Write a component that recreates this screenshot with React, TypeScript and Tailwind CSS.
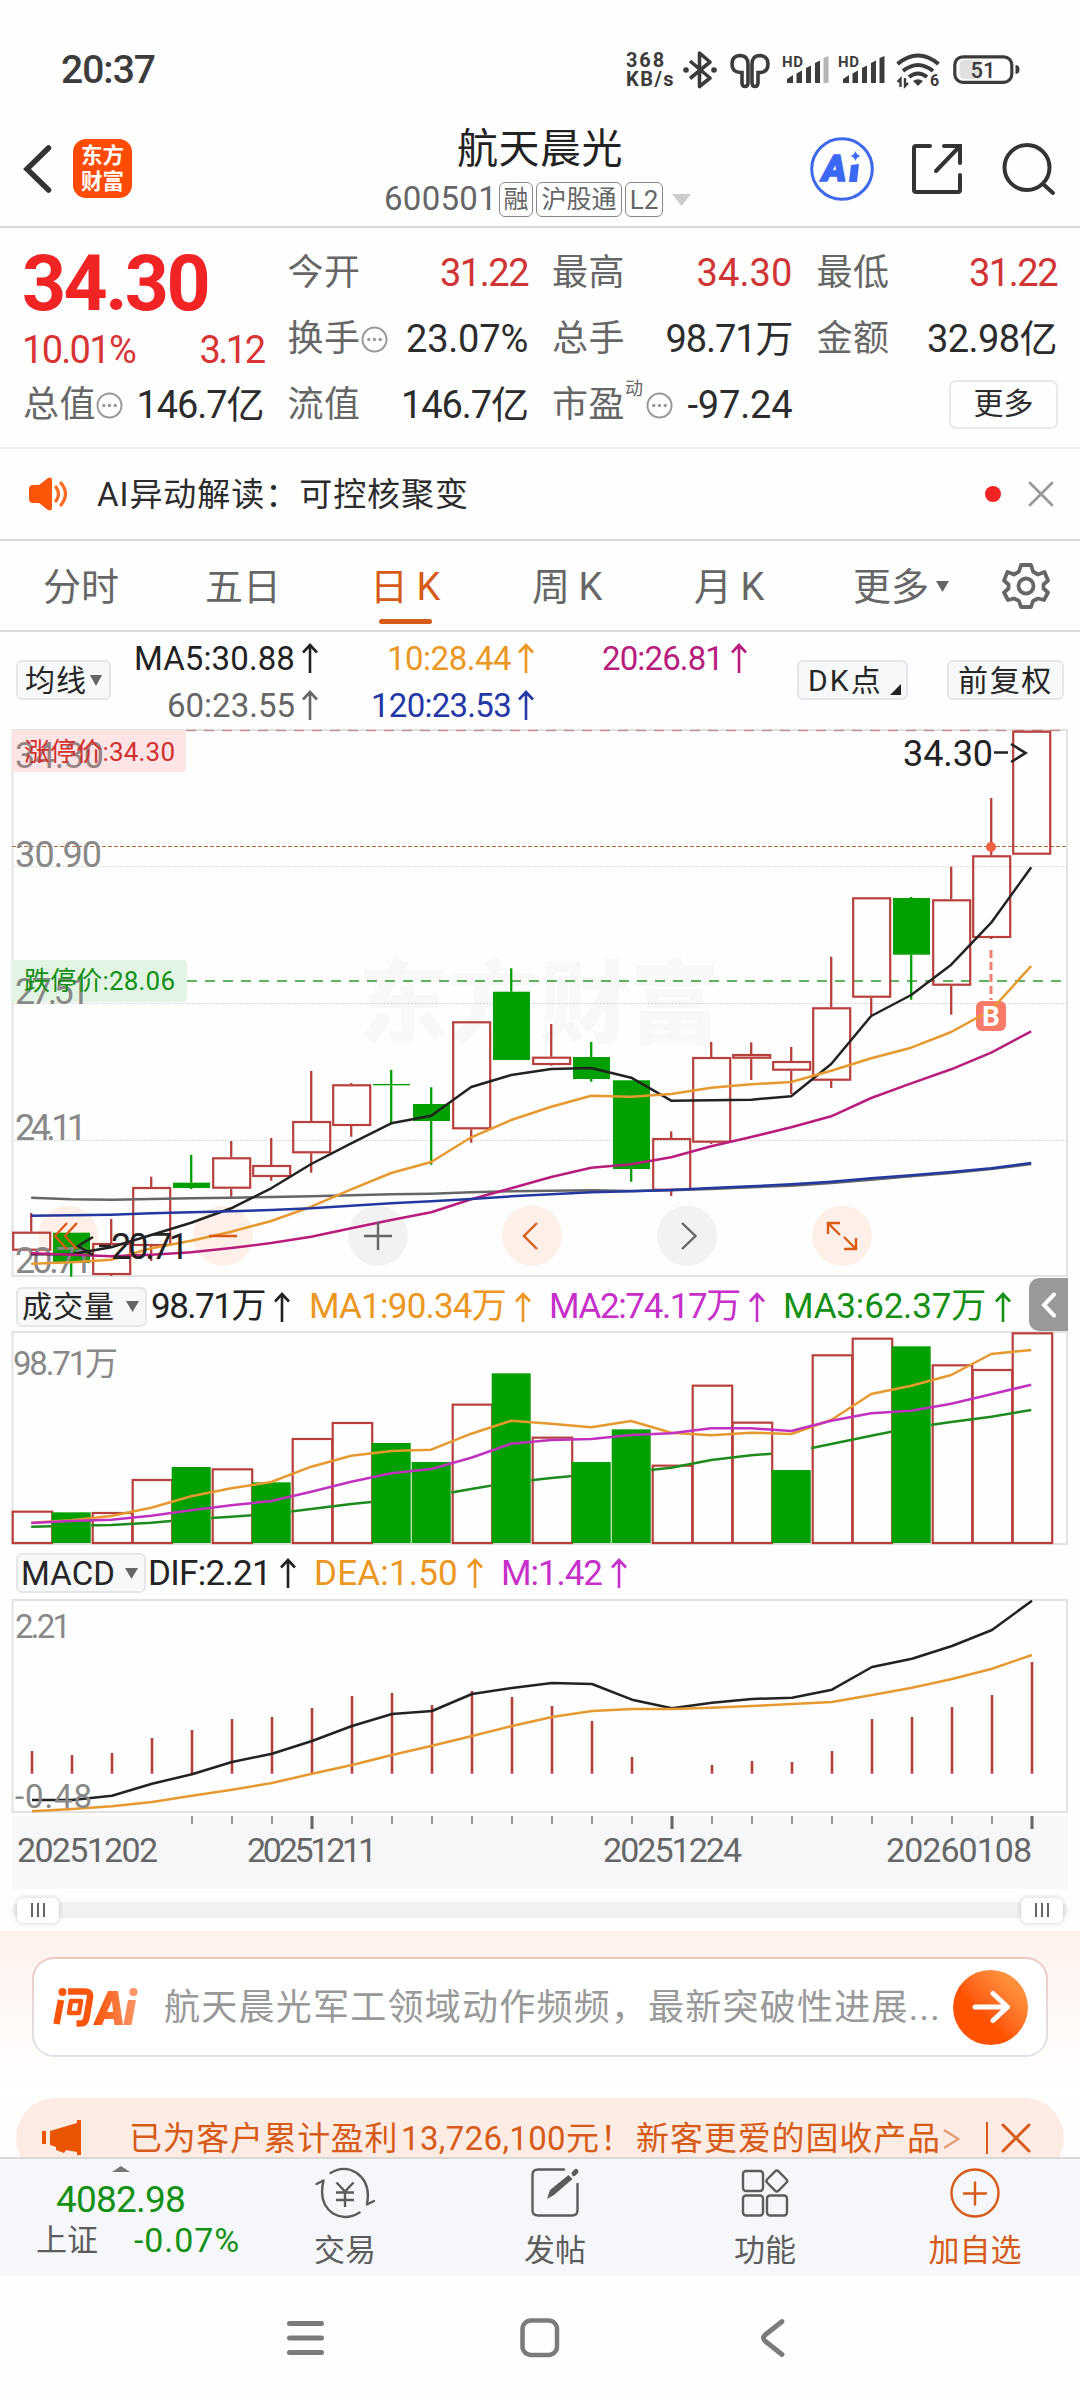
import React, { useLayoutEffect, useRef, useState } from "react";

/* Single line of text whose tracking is adjusted so that it fills w pixels. */
function Fit({ w, className = "", outer = "", children }: { w: number; className?: string; outer?: string; children: string }) {
  const ref = useRef<HTMLSpanElement>(null);
  const [spacing, setSpacing] = useState(0);
  useLayoutEffect(() => {
    const el = ref.current;
    if (el) setSpacing((w - el.getBoundingClientRect().width) / Array.from(children).length);
  }, []);
  return (
    <span className={"inline-block shrink-0 whitespace-nowrap " + outer} style={{ width: w }}>
      <span ref={ref} className={className} style={{ letterSpacing: spacing }}>
        {children}
      </span>
    </span>
  );
}

function Arrow({ className = "" }: { className?: string }) {
  return (
    <svg width="16" height="30" viewBox="0 0 16 30" fill="none" stroke="currentColor" strokeWidth="2.6" className={"shrink-0 " + className}>
      <path d="M8 30V2M1 9.5L8 2l7 7.5" />
    </svg>
  );
}

function Down({ w, h, className = "" }: { w: number; h: number; className?: string }) {
  return (
    <svg width={w} height={h} viewBox="0 0 12 10" preserveAspectRatio="none" fill="currentColor" className={"shrink-0 " + className}>
      <path d="M0 0h12L6 10z" />
    </svg>
  );
}

function Dots({ className = "" }: { className?: string }) {
  return (
    <svg width="27" height="27" viewBox="0 0 27 27" className={"shrink-0 " + className}>
      <circle cx="13.5" cy="13.5" r="12" fill="none" stroke="#999" strokeWidth="2" />
      <circle cx="7.8" cy="13.5" r="1.7" fill="#999" />
      <circle cx="13.5" cy="13.5" r="1.7" fill="#999" />
      <circle cx="19.2" cy="13.5" r="1.7" fill="#999" />
    </svg>
  );
}

function Signal({ last }: { last: string }) {
  return (
    <svg width="47" height="30" viewBox="0 0 47 30" fill="#3c3c3c" className="overflow-visible">
      <text x="0" y="12" fontSize="15" fontWeight="700" fontFamily="Roboto" textLength="21">HD</text>
      <path d="M5 28v-4q3-2 6-4v8z" />
      <path d="M14.500 28v-9.500l5.500-3V28z" />
      <path d="M24 28V13l5-2.500V28z" />
      <path d="M33 28V8l5-2.500V28z" />
      <path d="M41.500 28V3l5-2v27z" fill={last} />
    </svg>
  );
}

function StatusBar() {
  return (
    <div className="flex h-[118px] items-start text-[#3c3c3c]">
      <div className="ml-[61px] mt-[51px] leading-none text-[39px] font-medium"><Fit w={94}>20:37</Fit></div>
      <div className="ml-[471px] mt-[51px] flex flex-col text-[20px] font-bold leading-[19px]">
        <Fit w={40}>368</Fit>
        <Fit w={49}>KB/s</Fit>
      </div>
      <svg width="34" height="38" viewBox="0 0 34 38" className="ml-[8px] mt-[51px]" fill="none" stroke="#3c3c3c" strokeWidth="3.6" strokeLinejoin="round">
        <path d="M7 10l20 17-10.500 8.500V2L27 11 7 27.500" />
        <circle cx="3" cy="19" r="2.800" fill="#3c3c3c" stroke="none" />
        <circle cx="31" cy="19" r="2.800" fill="#3c3c3c" stroke="none" />
      </svg>
      <svg width="40" height="36" viewBox="0 0 40 36" className="ml-[13px] mt-[53px]" fill="none" stroke="#3c3c3c" strokeWidth="3.600">
        <path d="M12 19.500v10q0 4 3 4t3-4V11q0-8.500-8-8.500Q2 3 2 11t8 8.500z" />
        <path d="M28 19.500v10q0 4-3 4t-3-4V11q0-8.500 8-8.500Q38 3 38 11t-8 8.500z" />
      </svg>
      <div className="ml-[12px] mt-[55px]"><Signal last="#b5b5b5" /></div>
      <div className="ml-[9px] mt-[55px]"><Signal last="#3c3c3c" /></div>
      <svg width="44" height="34" viewBox="0 0 44 34" className="ml-[11px] mt-[54px] overflow-visible" fill="none" stroke="#3c3c3c" strokeWidth="4">
        <path d="M1.500 10Q22-7 42.500 10" />
        <path d="M7 17Q22 5 37 17" />
        <path d="M13 23q9-7 18 0" />
        <path d="M17 27q5-3.500 10 0l-5 5z" fill="#3c3c3c" stroke="none" />
        <path d="M4.500 33v-8l-3 3M9 24v8l3-3" strokeWidth="2.400" />
        <text x="34" y="32" fontSize="16" fontWeight="700" fontFamily="Roboto" fill="#3c3c3c" stroke="none">6</text>
      </svg>
      <svg width="68" height="30" viewBox="0 0 68 30" className="ml-[13px] mt-[55px]">
        <rect x="1.800" y="1.800" width="57" height="25.500" rx="8" fill="none" stroke="#3c3c3c" strokeWidth="3.200" />
        <path d="M11 5h16v19H11q-4.500 0-4.500-5v-9q0-5 4.500-5z" fill="#e0e0e0" />
        <path d="M62.500 10q4 0 4 4.500t-4 4.500z" fill="#3c3c3c" />
        <text x="30" y="22.500" textAnchor="middle" fontSize="22" fontWeight="500" fontFamily="Roboto" fill="#3c3c3c">51</text>
      </svg>
    </div>
  );
}

function Header() {
  return (
    <div className="flex h-[110px] items-start border-b-2 border-[#dadada]">
      <svg width="30" height="50" viewBox="0 0 30 50" className="ml-[23px] mt-[26px]" fill="none" stroke="#333" strokeWidth="5.500" strokeLinecap="round">
        <path d="M25.500 4L4 25l21.500 21" />
      </svg>
      <div className="ml-[20px] mt-[21px] flex h-[59px] w-[59px] flex-col items-center justify-center rounded-[13px] bg-[#ff4b04] text-[21.5px] font-bold leading-[26px] text-white">
        <span>东方</span>
        <span>财富</span>
      </div>
      <div className="ml-[253px] flex w-[310px] flex-col">
        <div className="ml-[72px] mt-[11px] text-[41px] leading-none text-[#222]"><Fit w={166}>航天晨光</Fit></div>
        <div className="mt-[12px] flex h-[35px] items-center text-[#666]">
          <Fit w={113} className="text-[33px] leading-none" outer="-ml-px">600501</Fit>
          <span className="ml-[2px] flex h-[35px] w-[34px] items-center justify-center rounded-[6px] border-[1.5px] border-[#888] text-[25px] leading-none">融</span>
          <span className="ml-[3px] flex h-[35px] w-[86px] items-center justify-center rounded-[6px] border-[1.5px] border-[#888] text-[25px] leading-none">沪股通</span>
          <span className="ml-[3px] flex h-[35px] w-[38px] items-center justify-center rounded-[6px] border-[1.5px] border-[#888] text-[26px] leading-none">L2</span>
          <Down w={19} h={12} className="ml-[9px] text-[#ccc]" />
        </div>
      </div>
      <svg width="66" height="66" viewBox="0 0 66 66" className="ml-[114px] mt-[18px]">
        <circle cx="33" cy="33" r="30.300" fill="none" stroke="#3e68ea" strokeWidth="3" />
        <text x="13" y="45" fontSize="37" fontWeight="900" fontStyle="italic" fontFamily="Roboto" fill="#3b68f5" stroke="#3b68f5" strokeWidth="1.500" textLength="26">A</text>
        <path d="M42 29l8-1-2 18h-8z" fill="#3b68f5" />
        <path d="M46.500 15q1 4 5 5-4 1-5 5-1-4-5-5 4-1 5-5z" fill="#3b68f5" />
      </svg>
      <svg width="52" height="52" viewBox="0 0 52 52" className="ml-[36px] mt-[25px]" fill="none" stroke="#333" strokeWidth="4">
        <path d="M19 3H5Q3 3 3 5v42q0 2 2 2h42q2 0 2-2V32" strokeLinecap="round" />
        <path d="M33 3h16v17M49 3L25 28" strokeLinecap="round" />
      </svg>
      <svg width="54" height="54" viewBox="0 0 54 54" className="ml-[39px] mt-[25px]" fill="none" stroke="#333" strokeWidth="4">
        <circle cx="25" cy="24.500" r="22.500" />
        <path d="M41 41l10 9" strokeLinecap="round" />
      </svg>
    </div>
  );
}

function Stat({ label, vw, value, red, dots }: { label: string; vw: number; value: string; red?: boolean; dots?: boolean }) {
  return (
    <div className="flex h-[66px] items-center text-[36px] leading-none">
      <Fit w={73} className="text-[#666]">{label}</Fit>
      {dots && <Dots />}
      <div className={"ml-auto text-[38px] " + (red ? "text-[#d03434]" : "text-[#2c2c2c]")}><Fit w={vw}>{value}</Fit></div>
    </div>
  );
}

function Quote() {
  return (
    <div className="grid h-[221px] grid-cols-4 gap-x-6 border-b-2 border-[#efefef] px-[23px] pt-[12px]">
      <div>
        <div className="h-[86px] pt-[6px] text-[77px] font-bold leading-none text-[#f02424]"><Fit w={186} outer="-ml-px">34.30</Fit></div>
        <div className="flex h-[46px] items-center justify-between pt-[2px] text-[38px] leading-none text-[#d83434]">
          <Fit w={113} outer="-ml-px">10.01%</Fit>
          <Fit w={64}>3.12</Fit>
        </div>
        <Stat label="总值" value="146.7亿" vw={127} dots />
      </div>
      <div>
        <Stat label="今开" value="31.22" vw={88} red />
        <Stat label="换手" value="23.07%" vw={122} dots />
        <Stat label="流值" value="146.7亿" vw={127} />
      </div>
      <div>
        <Stat label="最高" value="34.30" vw={96} red />
        <Stat label="总手" value="98.71万" vw={127} />
        <div className="flex h-[66px] items-center text-[36px] leading-none">
          <Fit w={73} className="text-[#666]">市盈</Fit>
          <span className="mb-[32px] text-[18px] text-[#666]">动</span>
          <Dots className="ml-[3px]" />
          <div className="ml-auto text-[38px] text-[#2c2c2c]"><Fit w={105}>-97.24</Fit></div>
        </div>
      </div>
      <div>
        <Stat label="最低" value="31.22" vw={88} red />
        <Stat label="金额" value="32.98亿" vw={130} />
        <div className="flex h-[66px] items-center justify-end">
          <span className="mb-[2px] -mr-px flex h-[49px] w-[109px] items-center justify-center rounded-[7px] border-2 border-[#e9e9e9] text-[30px] leading-none text-[#2c2c2c]">更多</span>
        </div>
      </div>
    </div>
  );
}

function AiNotice() {
  return (
    <div className="flex h-[92px] items-center border-b-2 border-[#dadada] text-[#2c2c2c]">
      <svg width="40" height="34" viewBox="0 0 40 34" className="ml-[29px]">
        <path d="M4 8h6L19 1q4-1.500 4 2v28q0 3.500-4 2l-9-7H4q-4 0-4-4V12q0-4 4-4z" fill="#fb5607" />
        <path d="M27 10q5 7 0 14M32 6q9 11 0 22" fill="none" stroke="#fb6a20" strokeWidth="3.200" strokeLinecap="round" />
      </svg>
      <Fit w={372} outer="ml-[28px] mt-[2px]" className="text-[33px] leading-none">AI异动解读：可控核聚变</Fit>
      <span className="ml-[516px] h-4 w-4 shrink-0 rounded-full bg-[#f02424]" />
      <svg width="26" height="26" viewBox="0 0 26 26" className="ml-[27px]" fill="none" stroke="#999" strokeWidth="2.800" strokeLinecap="round">
        <path d="M2 2l22 22M24 2L2 24" />
      </svg>
    </div>
  );
}

function Tabs() {
  const tabs = ["分时", "五日", "日 K", "周 K", "月 K"];
  return (
    <div className="flex h-[91px] items-stretch border-b-2 border-[#dadada] text-[38px] leading-none text-[#666]">
      {tabs.map((t, i) => (
        <div key={t} className={"flex w-[162px] flex-col items-center pt-[27px] " + (i === 2 ? "text-[#d65a18]" : "")}>
          <span className={t.length > 2 ? "tracking-[-0.5px]" : ""}>{t}</span>
          {i === 2 && <span className="mt-[13px] h-[5px] w-[53px] rounded-full bg-[#d65a18]" />}
        </div>
      ))}
      <div className="ml-[43px] flex items-center pt-[2px]"><Fit w={76}>更多</Fit><Down w={13} h={11} className="ml-[7px]" /></div>
      <svg width="48" height="50" viewBox="-24 -25 48 50" className="ml-[53px] mt-[20px]" fill="none" stroke="#666" strokeWidth="3.800" strokeLinejoin="round">
        <path d="M-5-21H5L7-14.500 12-11.500 18.500-14 22-5.500 17.500-1.500V2.500L22 6.500 18 14 12 12.500 7 15 5 21H-5L-7 15-12 12.500-18 14-22 6.500-17.500 2.500V-1.500L-22-5.500-18.500-14-12-11.500-7-14.500z" />
        <circle r="7.500" />
      </svg>
    </div>
  );
}

const btn = "flex h-10 shrink-0 items-center rounded-[6px] border-2 border-[#e4e6ea] bg-[#f7f8fa] text-[#262626] leading-none";

function MaRow() {
  return (
    <div className="flex h-[97px] text-[33px] leading-none">
      <div className={btn + " ml-4 mt-[28px] w-[95px] pl-[7px] text-[30px]"}>
        <Fit w={62} outer="mt-px">均线</Fit><Down w={12} h={11} className="ml-[3px] text-[#666]" />
      </div>
      <div className="ml-[23px] flex flex-col items-end">
        <div className="flex h-[47px] items-center pt-[5px] text-[#222]"><Fit w={161}>MA5:30.88</Fit><Arrow className="ml-[7px]" /></div>
        <div className="flex h-[47px] items-center pt-[5px] text-[#666]"><Fit w={128}>60:23.55</Fit><Arrow className="ml-[7px]" /></div>
      </div>
      <div className="ml-[53px] flex flex-col items-end">
        <div className="flex h-[47px] items-center pt-[5px] text-[#eb9722]"><Fit w={124}>10:28.44</Fit><Arrow className="ml-[7px]" /></div>
        <div className="flex h-[47px] items-center pt-[5px] text-[#2338a5]"><Fit w={140}>120:23.53</Fit><Arrow className="ml-[7px]" /></div>
      </div>
      <div className="ml-[68px] flex h-[47px] items-center pt-[5px] text-[#b81c7d]"><Fit w={121}>20:26.81</Fit><Arrow className="ml-[8px]" /></div>
      <div className={btn + " ml-[50px] mt-[28px] w-[111px] pl-[9px] text-[30px]"}>
        <Fit w={75} outer="mt-px">DK点</Fit>
        <svg width="11" height="11" viewBox="0 0 11 11" className="ml-[7px] mt-[18px]"><path d="M11 0v11H0z" fill="#222" /></svg>
      </div>
      <div className={btn + " ml-[39px] mt-[28px] w-[117px] pl-[9px] text-[30px]"}><Fit w={95} outer="mt-px">前复权</Fit></div>
    </div>
  );
}

const STEP = 40;
const X0 = 31.2;
const RED = "#b8403c";
const GREEN = "#00a000";

/* [up, high, bodyTop, bodyBottom, low] */
const candles: [boolean, number, number, number, number][] = [
  [true, 1213, 1231.7, 1250.7, 1250.7],
  [false, 1232.7, 1232.7, 1263, 1276.7],
  [true, 1219, 1243, 1275, 1276],
  [true, 1176.7, 1187, 1246, 1261],
  [false, 1155, 1182.7, 1188, 1189],
  [true, 1141, 1157.3, 1188.7, 1196.7],
  [true, 1138, 1165, 1177, 1180.7],
  [true, 1071, 1121, 1153.3, 1172.7],
  [true, 1083, 1084.3, 1126, 1136.7],
  [false, 1070, 1084, 1085.3, 1123],
  [false, 1087.3, 1104, 1121, 1164.7],
  [true, 1021.3, 1021.3, 1129.3, 1142.7],
  [false, 968.3, 991.7, 1060, 1060],
  [true, 1024, 1056.7, 1065, 1065.7],
  [false, 1042, 1057, 1079, 1081.7],
  [false, 1080.3, 1080.3, 1169, 1181.7],
  [true, 1131.3, 1138, 1190.7, 1196],
  [true, 1042, 1057, 1142.7, 1144],
  [true, 1042.3, 1054, 1058.7, 1080],
  [true, 1047, 1061, 1070.7, 1094],
  [true, 956.7, 1007.3, 1080.7, 1088],
  [true, 897.3, 897.3, 997.7, 1015.7],
  [false, 897, 898, 954.7, 999.7],
  [true, 866.7, 899.3, 985.7, 1014.7],
  [true, 798, 855.3, 938, 939],
  [true, 730.7, 730.7, 854.7, 854.7],
];

function points(values: number[], base: number, x0 = X0) {
  return values.map((v, i) => `${(x0 + i * STEP).toFixed(1)},${(base + v / 3).toFixed(1)}`).join(" ");
}

const ma5 = [1183, 1183, 1162, 1125, 1088, 1045, 985, 912, 850, 790, 767, 681, 645, 627, 624, 653, 722, 721, 719, 709, 612, 468, 405, 314, 188, 22];
const ma10 = [1211, 1207, 1199, 1165, 1142, 1115, 1083, 1040, 988, 939, 906, 832, 780, 740, 707, 710, 702, 683, 673, 666, 632, 595, 563, 516, 450, 318];
const ma20 = [1180, 1184, 1189, 1184, 1177, 1164, 1149, 1130, 1105, 1080, 1057, 1018, 985, 951, 923, 913, 892, 859, 831, 802, 769, 714, 670, 628, 578, 514];
const ma60 = [1013, 1018, 1019, 1017, 1015, 1013, 1011, 1009, 1006, 1003, 1001, 997, 994, 992, 991, 993, 991, 987, 982, 977, 969, 959, 949, 939, 927, 912];
const ma120 = [1067, 1066, 1064, 1060, 1057, 1054, 1050, 1045, 1037, 1030, 1024, 1017, 1009, 1003, 997, 994, 990, 984, 979, 973, 965, 955, 946, 936, 925, 909];

function T({ x, y, w, size, fill, children, weight }: { x: number; y: number; w: number; size: number; fill: string; children: string; weight?: number }) {
  return (
    <text x={x} y={y} textLength={w} fontSize={size} fill={fill} fontWeight={weight}>{children}</text>
  );
}

function PriceChart() {
  return (
    <svg width="1080" height="548" viewBox="0 729 1080 548" className="block">
      <T x={358} y={1036} w={362} size={90} fill="#f8f8f8" weight={900}>东方财富</T>
      {[866.7, 1003.5, 1140.5].map((y) => (
        <line key={y} x1="12" x2="1067" y1={y} y2={y} stroke="#cfcfcf" strokeWidth="1" strokeDasharray="1.500 1.500" />
      ))}
      <path d="M12.500 730H1067V1276H12.500z" fill="none" stroke="#e2e2e2" strokeWidth="2" />
      {[68, 223, 532, 842].map((x) => <circle key={x} cx={x} cy="1235.700" r="30" fill="#fef0e8" />)}
      {[378, 687].map((x) => <circle key={x} cx={x} cy="1235.700" r="30" fill="#f2f2f2" />)}
      <line x1="186" x2="1060" y1="730.500" y2="730.500" stroke="#c58f8f" strokeWidth="1.400" strokeDasharray="10 8" />
      <line x1="187" x2="1062" y1="981" y2="981" stroke="#5db35f" strokeWidth="1.800" strokeDasharray="10 8" />
      <line x1="12" x2="1066" y1="846.500" y2="846.500" stroke="#b06a3c" strokeWidth="1.200" strokeDasharray="4 2" />

      {candles.map(([up, hi, top, bot, lo], i) => {
        const x = X0 + i * STEP;
        const c = up ? RED : GREEN;
        return (
          <g key={i}>
            {hi < top && <line x1={x} x2={x} y1={hi} y2={top} stroke={c} strokeWidth="2.300" />}
            {lo > bot && <line x1={x} x2={x} y1={bot} y2={lo} stroke={c} strokeWidth="2.300" />}
            {up
              ? <rect x={x - 18} y={top + 1} width="37" height={Math.max(bot - top - 2, 2)} fill="none" stroke={c} strokeWidth="2.200" />
              : <rect x={x - 18.2} y={top} width="37" height={bot - top} fill={c} />}
          </g>
        );
      })}

      <path d="M12 730H182q4 0 4 4v34q0 4-4 4H12z" fill="#fee5e5" />
      <path d="M12 960H183q4 0 4 4v34q0 4-4 4H12z" fill="#e2f5e4" />
      <T x={15} y={768} w={89} size={36} fill="#968484">34.30</T>
      <T x={15} y={867} w={87} size={36} fill="#888">30.90</T>
      <T x={15} y={1004} w={75} size={36} fill="#888">27.51</T>
      <T x={15} y={1139.5} w={72} size={36} fill="#888">24.11</T>
      <T x={15} y={1273} w={78} size={36} fill="#888">20.71</T>
      <T x={24} y={761} w={151} size={26} fill="#d22f2f">涨停价:34.30</T>
      <T x={24} y={990} w={151} size={26} fill="#149014">跌停价:28.06</T>

      <line x1="991" x2="991" y1="950" y2="1000" stroke="#ee8072" strokeWidth="3" strokeDasharray="8 4" />
      <rect x="976" y="1001" width="30" height="30" rx="6" fill="#f87b6a" />
      <circle cx="991" cy="847" r="5" fill="#ef6040" />

      <g fill="none" strokeWidth="2.500" strokeLinejoin="round">
        <polyline points={points(ma60, 860)} stroke="#666" />
        <polyline points={points(ma5, 860)} stroke="#222" />
        <polyline points={points(ma10, 860)} stroke="#e6992f" />
        <polyline points={points(ma20, 860)} stroke="#b81c7d" />
        <polyline points={points(ma120, 860)} stroke="#2338a0" />
      </g>
      <text x="991" y="1026" fontSize="28" fontWeight="700" fill="#fff" textAnchor="middle">B</text>

      <T x={903} y={766} w={90} size={36} fill="#222">34.30</T>
      <path d="M994 752.500h14M1011 744l14.500 9-14.500 9" fill="none" stroke="#222" strokeWidth="2.600" />
      <path d="M93 1237l-15 9 15 9M99 1246h12" fill="none" stroke="#222" strokeWidth="2.600" />
      <T x={111} y={1259} w={78} size={36} fill="#222">20.71</T>

      <g fill="none" strokeWidth="2.400">
        <path d="M67 1223l-12 13 12 13M77 1223l-12 13 12 13M209 1236h28M537 1223l-13 13 13 13M828 1234v-11h12M828 1223l12 12M856 1238v11h-12M856 1249l-12-12" stroke="#db5a14" />
        <path d="M364 1236h28M378 1222v28M682 1223l13.500 13-13.500 13" stroke="#666" />
      </g>
    </svg>
  );
}

const volTops = [722, 727, 726, 627, 591, 595, 637, 504, 456, 519, 576, 401, 310, 500, 576, 478, 584, 344, 455, 600, 253, 203, 229, 283, 297, 187];
const volGreen = [1, 4, 6, 9, 10, 12, 14, 15, 19, 22];
const vol1 = [758, 751, 738, 713, 679, 655, 636, 590, 557, 543, 539, 491, 452, 461, 472, 453, 488, 496, 488, 492, 450, 372, 347, 315, 252, 240];
const vol2 = [759, 753, 749, 737, 721, 706, 693, 665, 635, 610, 597, 563, 521, 510, 507, 495, 490, 475, 475, 483, 452, 430, 422, 401, 373, 344];
const vol3 = [770, 767, 765, 758, 748, 740, 732, 717, 702, 690, 678, 657, 637, 624, 613, 606, 593, 570, 556, 547, 522, 497, 473, 456, 440, 420];

function VolumeChart() {
  return (
    <svg width="1080" height="214" viewBox="0 1331 1080 214" className="block">
      <path d="M12.500 1332H1067V1544H12.500z" fill="none" stroke="#e2e2e2" strokeWidth="2" />
      <T x={13} y={1375} w={105} size={33} fill="#888">98.71万</T>
      {volTops.map((t, i) => {
        const x = X0 + i * STEP;
        const y = 1270 + t / 3;
        return volGreen.includes(i)
          ? <rect key={i} x={x - 19.5} y={y} width="39" height={1543 - y} fill={GREEN} />
          : <rect key={i} x={x - 18.5} y={y + 1} width="39.500" height={1542 - y} fill="none" stroke={RED} strokeWidth="2.200" />;
      })}
      <g fill="none" strokeWidth="2.500" strokeLinejoin="round">
        <polyline points={points(vol1, 1270)} stroke="#e6992f" />
        <polyline points={points(vol2, 1270)} stroke="#c031c0" />
        <clipPath id="offGreen">
          {volTops.map((t, i) => !volGreen.includes(i) && <rect key={i} x={X0 + i * STEP - 20} y="1331" width="40" height="214" />)}
        </clipPath>
        <polyline points={points(vol3, 1270)} stroke="#1c8c1c" clipPath="url(#offGreen)" />
      </g>
    </svg>
  );
}

const macdTops = [483, 495, 489, 444, 420, 387, 381, 354, 318, 309, 345, 303, 321, 348, 393, 501, 551, 525, 513, 516, 483, 387, 381, 351, 315, 216];
const dif = [630, 630, 617, 581, 553, 516, 491, 453, 408, 372, 363, 312, 294, 279, 282, 329, 355, 338, 327, 323, 299, 231, 206, 168, 120, 32];
const dea = [664, 657, 649, 636, 617, 599, 579, 551, 525, 495, 467, 438, 408, 381, 363, 357, 357, 353, 348, 342, 336, 315, 293, 267, 236, 195];

function MacdChart() {
  return (
    <svg width="1080" height="290" viewBox="0 1599 1080 290" className="block">
      <path d="M12.500 1600H1067V1812H12.500z" fill="none" stroke="#e2e2e2" strokeWidth="2" />
      <g fill="none" strokeWidth="2.500" strokeLinejoin="round">
        {macdTops.map((t, i) => (
          <line key={i} x1={32 + i * STEP} x2={32 + i * STEP} y1={1590 + t / 3} y2="1773.700" stroke="#b0403c" strokeWidth="2.600" />
        ))}
        <polyline points={points(dif, 1590, 32)} stroke="#222" />
        <polyline points={points(dea, 1590, 32)} stroke="#e6992f" />
      </g>
      <T x={15} y={1638} w={56} size={33} fill="#888">2.21</T>
      <T x={15} y={1808} w={77} size={33} fill="#888">-0.48</T>
      <rect x="12" y="1816" width="1056" height="73" fill="#f7f7fa" />
      {Array.from({ length: 22 }, (_, k) => k + 4).map((i) => {
        const major = i === 7 || i === 16 || i === 25;
        return <line key={i} x1={32 + i * STEP} x2={32 + i * STEP} y1="1816" y2={major ? 1829 : 1824} stroke={major ? "#666" : "#999"} strokeWidth={major ? 3 : 2} />;
      })}
      <T x={17} y={1862} w={141} size={34} fill="#666">20251202</T>
      <T x={247} y={1862} w={130} size={34} fill="#666">20251211</T>
      <T x={603} y={1862} w={139} size={34} fill="#666">20251224</T>
      <T x={886} y={1862} w={146} size={34} fill="#666">20260108</T>
    </svg>
  );
}

function VolumeRow() {
  return (
    <div className="flex h-[54px] items-center pt-[5px] text-[35px] leading-none">
      <div className={btn + " ml-4 w-[131px] pl-[4px] text-[30px]"}><Fit w={93}>成交量</Fit><Down w={13} h={11} className="ml-[11px] text-[#666]" /></div>
      <div className="ml-[4px] flex items-center text-[#222]"><Fit w={114}>98.71万</Fit><Arrow className="ml-[9px]" /></div>
      <div className="ml-[19px] flex items-center text-[#eb9722]"><Fit w={197}>MA1:90.34万</Fit><Arrow className="ml-[9px]" /></div>
      <div className="ml-[18px] flex items-center text-[#c62fc9]"><Fit w={191}>MA2:74.17万</Fit><Arrow className="ml-[9px]" /></div>
      <div className="ml-[18px] flex items-center text-[#149014]"><Fit w={203}>MA3:62.37万</Fit><Arrow className="ml-[9px]" /></div>
      <div className="mb-[4px] ml-auto mr-[12px] flex h-[53px] w-[39px] items-center justify-center rounded-l-[10px] bg-[#999]">
        <svg width="16" height="26" viewBox="0 0 16 26" fill="none" stroke="#fff" strokeWidth="4" strokeLinecap="round"><path d="M13 2.500L3 13l10 10.500" /></svg>
      </div>
    </div>
  );
}

function MacdRow() {
  return (
    <div className="flex h-[54px] items-center pt-[2px] text-[35px] leading-none">
      <div className={btn + " ml-4 w-[130px] pl-[3px] text-[33px]"}><Fit w={94}>MACD</Fit><Down w={13} h={11} className="ml-[10px] text-[#666]" /></div>
      <div className="ml-[2px] flex items-center text-[#222]"><Fit w={123}>DIF:2.21</Fit><Arrow className="ml-[9px]" /></div>
      <div className="ml-[18px] flex items-center text-[#eb9722]"><Fit w={144}>DEA:1.50</Fit><Arrow className="ml-[9px]" /></div>
      <div className="ml-[18px] flex items-center text-[#c62fc9]"><Fit w={101}>M:1.42</Fit><Arrow className="ml-[9px]" /></div>
    </div>
  );
}

function Thumb() {
  return (
    <div className="flex h-[25px] w-[42px] items-center justify-center gap-[4px] rounded-[6px] bg-white shadow-[0_0_5px_rgba(0,0,0,0.2)]">
      <span className="h-[14px] w-[2px] bg-[#666]" />
      <span className="h-[14px] w-[2px] bg-[#666]" />
      <span className="h-[14px] w-[2px] bg-[#666]" />
    </div>
  );
}

function RangeSlider() {
  return (
    <div className="h-[42px] px-3 pt-[13px]">
      <div className="flex h-4 items-center justify-between rounded-full bg-[#f0f1f3] px-[5px]">
        <Thumb />
        <Thumb />
      </div>
    </div>
  );
}

function AskAi() {
  return (
    <div className="h-[167px] bg-linear-to-b from-[#fff1ec] via-[#fffaf8] via-60% to-white px-8 pt-[26px]">
      <div className="h-[100px] rounded-[22px] bg-linear-to-b from-[#f0c8c2] to-[#dfe3ec] p-[2px]">
        <div className="flex h-full items-center rounded-[20px] bg-white pl-[19px]">
          <svg width="86" height="42" viewBox="0 0 86 42">
            <defs>
              <linearGradient id="ask" x1="0" x2="86" gradientUnits="userSpaceOnUse">
                <stop offset="0.500" stopColor="#f9560c" />
                <stop offset="1" stopColor="#fb9a6c" />
              </linearGradient>
            </defs>
            <g fill="none" stroke="#f9560c" strokeWidth="6.500" strokeLinejoin="round">
              <path d="M8 14L3.500 38" />
              <path d="M15 5.500h17q6 0 5 6L33.500 32q-1 5.500-6 5.500h-4" />
              <path d="M18 15h10l-2 12H16z" strokeWidth="4.500" />
            </g>
            <circle cx="9.500" cy="6" r="4" fill="#f9560c" />
            <path d="M40 39L55 5h10l5 34h-8.500l-.7-6H51.500L49 39zM54 26h6l-1-11z" fill="url(#ask)" fillRule="evenodd" />
            <path d="M75 14h8l-4.500 25h-8z" fill="url(#ask)" />
            <circle cx="80.500" cy="6" r="4" fill="#fb9566" />
          </svg>
          <Fit w={777} outer="ml-[25px] mt-[2px]" className="text-[36px] leading-none text-[#999]">航天晨光军工领域动作频频，最新突破性进展...</Fit>
          <div className="ml-[12px] flex h-[75px] w-[75px] shrink-0 items-center justify-center rounded-full bg-linear-to-bl from-[#ff8f3c] from-20% to-[#ff5200] to-60%">
            <svg width="38" height="34" viewBox="0 0 38 34" fill="none" stroke="#fff" strokeWidth="5" strokeLinecap="round" strokeLinejoin="round"><path d="M3 17h32M21 3.500L35.500 17 21 30.500" /></svg>
          </div>
        </div>
      </div>
    </div>
  );
}

function Banner() {
  return (
    <div className="h-[59px] overflow-hidden px-4">
      <div className="flex h-20 items-center rounded-full bg-[#fcece4] pl-[26px] text-[33px] leading-none text-[#d65a18]">
        <svg width="40" height="36" viewBox="0 0 40 36" fill="#ea5504" className="shrink-0">
          <path d="M0 11h4v13H0zM8 11L35 3V0h4v35h-4v-3l-11-2-2 3-8-3v-3l-6-2z" />
        </svg>
        <Fit w={269} outer="ml-[47px]">已为客户累计盈利</Fit>
        <Fit w={165} outer="ml-[3px]">13,726,100</Fit>
        <Fit w={68}>元！</Fit>
        <Fit w={305} outer="ml-[2px]">新客更爱的固收产品</Fit>
        <svg width="17" height="22" viewBox="0 0 17 22" className="ml-[2px] mt-[2px] shrink-0" fill="none" stroke="#e39a72" strokeWidth="2.200"><path d="M1 2l14.500 9L1 20" /></svg>
        <span className="ml-[26px] h-8 w-[1.5px] shrink-0 bg-[#d65a18]" />
        <svg width="30" height="30" viewBox="0 0 30 30" className="ml-[13px] shrink-0" fill="none" stroke="#d65a18" strokeWidth="3" strokeLinecap="round"><path d="M2 2l26 26M28 2L2 28" /></svg>
      </div>
    </div>
  );
}

function NavItem({ label, orange, children }: { label: string; orange?: boolean; children: React.ReactNode }) {
  return (
    <div className={"flex w-[210px] flex-col items-center pt-[8px] text-[31px] leading-none " + (orange ? "text-[#d65a18]" : "text-[#5c5c5c]")}>
      <svg width="60" height="52" viewBox="0 0 60 52" fill="none" stroke="currentColor" strokeWidth="2.400" strokeLinecap="round">{children}</svg>
      <span className="mt-[16px]">{label}</span>
    </div>
  );
}

function BottomNav() {
  return (
    <div className="flex h-[119px] border-t-2 border-[#d8d8d8] bg-[#f6f7fa]">
      <div className="w-[240px] shrink-0 leading-none">
        <svg width="18" height="6" viewBox="0 0 18 6" className="ml-[112px] mt-[7px]"><path d="M0 6L9 0l9 6z" fill="#777" /></svg>
        <div className="ml-[56px] mt-[9px] text-[37px] leading-none text-[#149014]"><Fit w={129}>4082.98</Fit></div>
        <div className="mt-[4px] flex h-[36px] items-center">
          <span className="ml-[36px] shrink-0 whitespace-nowrap text-[31px] text-[#5c5c5c]">上证</span>
          <Fit w={106} outer="ml-[36px] text-[34px]" className="text-[#149014]">-0.07%</Fit>
        </div>
      </div>
      <NavItem label="交易">
        <path d="M15.500 6Q29-2 41 5.500 56 15.500 52 37M52 37.500l7-3.500" />
        <path d="M44.500 45.500Q31 54 18 46.500 3 36 8.500 13.500M8.500 13.500L1.500 17" />
        <path d="M21.500 15.500l8.500 9 8.500-9M30 24.500V40M21 25.500h18M21 33h18" strokeLinecap="butt" />
      </NavItem>
      <NavItem label="发帖">
        <path d="M39 2.500H13Q7.500 2.500 7.500 8v35q0 5.500 5.500 5.500h34q5.500 0 5.500-5.500V17" />
        <path d="M22 32l3-9L43.500 8l4 4L29 28z" fill="currentColor" stroke="none" />
        <path d="M49 6.500l2-2" strokeWidth="5" />
      </NavItem>
      <NavItem label="功能">
        <rect x="8" y="4" width="20" height="20" rx="3" />
        <rect x="8" y="28.500" width="20" height="20" rx="3" />
        <rect x="32" y="28.500" width="20" height="20" rx="3" />
        <rect x="33.800" y="6" width="16" height="16" rx="2.500" transform="rotate(45 41.800 14)" />
      </NavItem>
      <NavItem label="加自选" orange>
        <circle cx="30" cy="26" r="23.500" />
        <path d="M18 26.500h24M30 14.500v24" strokeLinecap="butt" />
      </NavItem>
    </div>
  );
}

function SystemNav() {
  return (
    <div className="flex h-[124px] items-start pt-[40px]">
      <svg width="40" height="44" viewBox="0 0 40 44" className="ml-[286px]" fill="none" stroke="#7b7b7b" strokeWidth="5" strokeLinecap="round"><path d="M3.500 7.500h32M3.500 22h32M3.500 36.500h32" /></svg>
      <svg width="44" height="44" viewBox="0 0 44 44" className="ml-[192px]" fill="none" stroke="#7b7b7b" strokeWidth="4.500"><rect x="4.500" y="4.500" width="34.500" height="34.500" rx="8.500" /></svg>
      <svg width="28" height="44" viewBox="0 0 28 44" className="ml-[198px]" fill="none" stroke="#7b7b7b" strokeWidth="4.800" strokeLinecap="round" strokeLinejoin="round"><path d="M22 5.500L5 19q-3 3 0 6L22 38.500" /></svg>
    </div>
  );
}

export default function App() {
  return (
    <div className="h-[2400px] w-[1080px] overflow-hidden bg-[#fefefe] font-['Roboto','Noto_Sans_CJK_SC',sans-serif]">
      <StatusBar />
      <Header />
      <Quote />
      <AiNotice />
      <Tabs />
      <MaRow />
      <PriceChart />
      <VolumeRow />
      <VolumeChart />
      <MacdRow />
      <MacdChart />
      <RangeSlider />
      <AskAi />
      <Banner />
      <BottomNav />
      <SystemNav />
    </div>
  );
}
